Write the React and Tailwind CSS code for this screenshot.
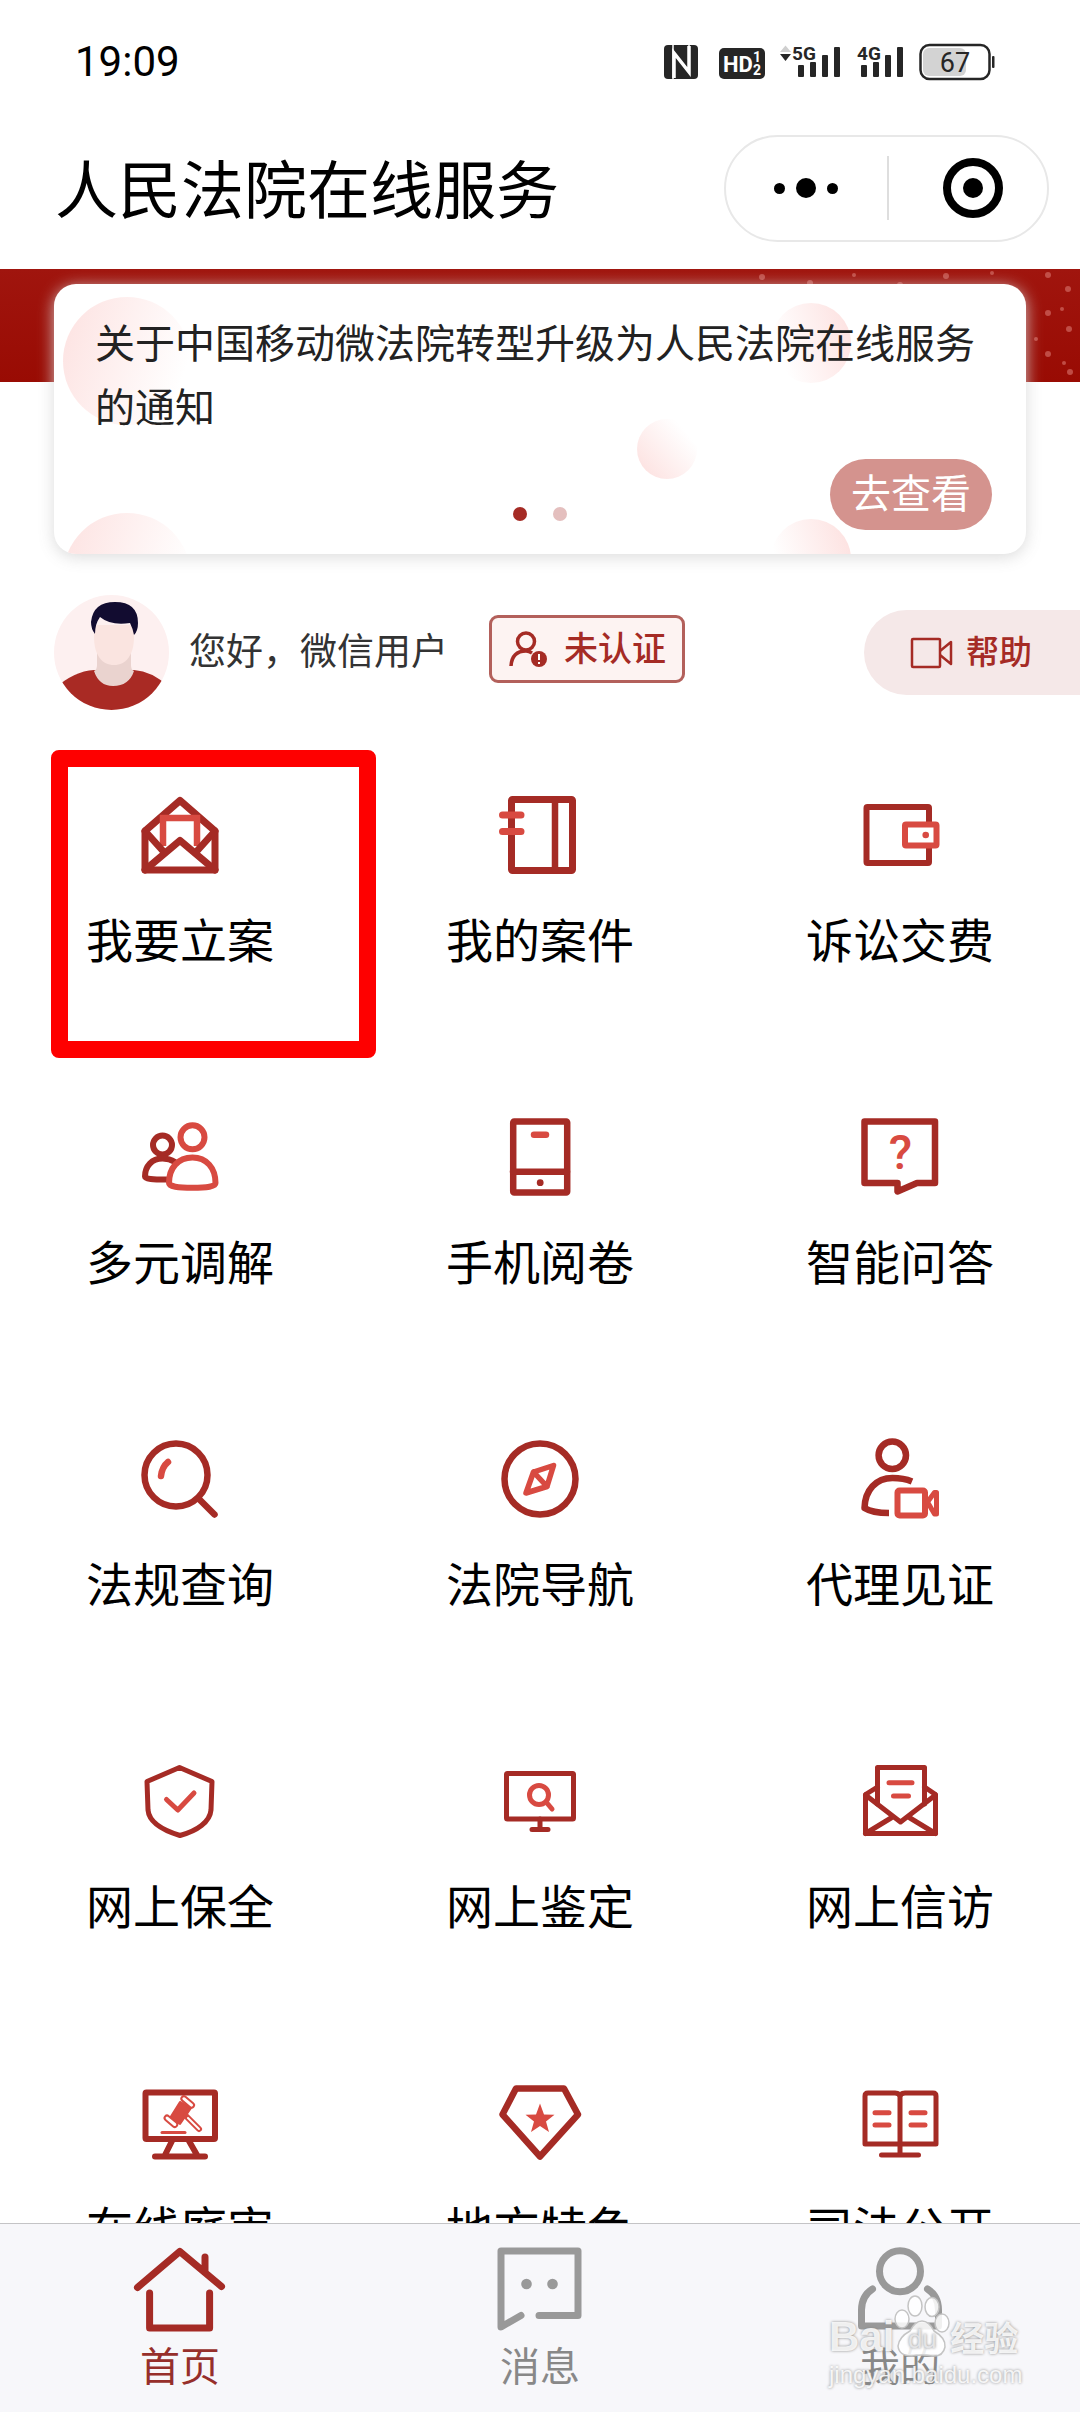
import React, { useState } from 'react';

const DARK = '#a52b25';
const LIGHT = '#d84a41';

// Shared wrapper for the line icons of the service grid
const GridIcon = ({ width = 7, children }) => (
    <svg
        viewBox="0 0 90 90"
        className="w-[90px] h-[90px]"
        fill="none"
        stroke={DARK}
        strokeWidth={width}
        strokeLinecap="round"
        strokeLinejoin="round"
        aria-hidden="true"
    >
        {children}
    </svg>
);

const FilingIcon = () => (
    <GridIcon>
        <path d="M45 10.5 L10 41 V80 H80 V41 Z" />
        <path d="M28 56 V28 H62 V56" stroke={LIGHT} strokeWidth="6.5" strokeLinejoin="miter" strokeLinecap="butt" />
        <path d="M10 41 L28 61 M80 41 L62 61 M10 80 L45 50.5 L80 80" />
    </GridIcon>
);

const CaseIcon = () => (
    <GridIcon>
        <rect x="16.5" y="9.5" width="61" height="71" rx="1" />
        <path d="M60 10 V80" strokeWidth="6.5" />
        <path d="M7.5 25 H26 M7.5 41.5 H26" stroke={LIGHT} />
    </GridIcon>
);

const WalletIcon = () => (
    <GridIcon width={6}>
        <rect x="11.5" y="17" width="62.5" height="56" rx="1" />
        <rect x="50" y="34.5" width="31.5" height="21" rx="1" stroke={LIGHT} fill="#fff" />
        <circle cx="70.7" cy="45" r="3.3" fill={LIGHT} stroke="none" />
    </GridIcon>
);

const MediationIcon = () => (
    <GridIcon width={6}>
        <circle cx="27.5" cy="33" r="9.5" />
        <path d="M40 50 C36 47.5 32 46.5 27.5 46.5 C17 46.5 10 54 10 64.5 C10 67 18 67.5 31 67.5" />
        <circle cx="57.5" cy="25.3" r="12" stroke={LIGHT} />
        <path
            d="M34 71 C34 56 43 45.5 57.5 45.5 C71.5 45.5 80.5 56 80.5 71 C80.5 74.5 72 75.8 57.5 75.8 C43 75.8 34 74.5 34 71 Z"
            stroke={LIGHT}
            fill="#fff"
        />
    </GridIcon>
);

const PhoneIcon = () => (
    <GridIcon width={6.5}>
        <rect x="18.2" y="9.5" width="54" height="71" rx="1" />
        <path d="M18 59.7 H72" />
        <path d="M39 22.7 H51" stroke={LIGHT} />
        <circle cx="45.2" cy="70.7" r="3.4" fill={DARK} stroke="none" />
    </GridIcon>
);

const QuestionIcon = () => (
    <GridIcon width={6.5}>
        <path d="M9.5 9.5 H80 V71 H62 L42.5 79.5 V71 H9.5 Z" />
        <text x="45.5" y="57" textAnchor="middle" fontSize="48" fontFamily="Roboto" fontWeight="500" fill={LIGHT} stroke="none">?</text>
    </GridIcon>
);

const SearchIcon = () => (
    <GridIcon width={6.5}>
        <circle cx="41" cy="41" r="31.5" />
        <path d="M64 65 L79.5 80.5" />
        <path d="M33 28 Q27 33 26 42" stroke={LIGHT} />
    </GridIcon>
);

const CompassIcon = () => (
    <GridIcon width={6.5}>
        <circle cx="45" cy="45" r="35.5" />
        <path d="M58.5 31.5 L38.5 38 L31 59 L52 52.5 Z M38.5 38 L52 52.5" stroke={LIGHT} strokeWidth="5.5" />
    </GridIcon>
);

const WitnessIcon = () => (
    <GridIcon width={6.5}>
        <circle cx="37.3" cy="21.3" r="13.7" />
        <path d="M57 47.5 C51 45 45 44 37.5 44 C21 44 10 56 9.5 74 C15 77.5 23 79 34 79" strokeLinecap="butt" />
        <rect x="42.5" y="56.5" width="27.5" height="25" rx="2" stroke={LIGHT} strokeWidth="6" />
        <path d="M72.5 68 L79.5 58.5 H81.5 V80 H79.5 Z" stroke={LIGHT} strokeWidth="5" />
    </GridIcon>
);

const ShieldIcon = () => (
    <GridIcon width={5}>
        <path d="M44.5 11.5 L77 25.5 L76 54 C75 66 62 75 45 79.5 C27 74 14 66 13 54 L12 25.5 Z" />
        <path d="M31.5 43.5 L42.8 54 L59 37" stroke={LIGHT} />
    </GridIcon>
);

const AppraisalIcon = () => (
    <GridIcon width={5}>
        <rect x="11.5" y="17.5" width="67" height="45.5" rx="1" />
        <path d="M45 63 V73.5 M37 73.5 H53" />
        <circle cx="44" cy="39" r="9.5" stroke={LIGHT} />
        <path d="M52 47 L57 53" stroke={LIGHT} />
    </GridIcon>
);

const LetterIcon = () => (
    <GridIcon width={5}>
        <path d="M22.5 48 V11.5 H69.5 V48" />
        <path d="M22.5 31 L10.5 38.5 V77.5 H80.5 V38.5 L69.5 31" />
        <path d="M10.5 39 L45.5 66 L80.5 39 M10.5 77.5 L36 62 M80.5 77.5 L55 62" />
        <path d="M34 26.7 H57 M38.5 40 H53.5" stroke={LIGHT} />
    </GridIcon>
);

const TrialIcon = () => (
    <GridIcon width={6}>
        <rect x="10.5" y="14.5" width="69.5" height="46.5" rx="1" />
        <path d="M37 63 L30 77 M54 63 L62 77 M20 78.5 H70" />
        <g stroke={LIGHT} strokeWidth="2">
            <path d="M45 24 L35 40 L45 46 L56 30 Z" fill={LIGHT} />
            <rect x="45" y="21" width="15" height="5" rx="2.5" transform="rotate(40 52 24)" fill="#fff" />
            <rect x="28" y="41" width="15" height="5" rx="2.5" transform="rotate(40 36 44)" fill="#fff" />
            <path d="M51 38 L64 51" strokeWidth="6" />
            <path d="M53 40 L64 51" stroke="#fff" strokeWidth="2" />
            <path d="M27 54.5 H50" strokeWidth="3" />
        </g>
    </GridIcon>
);

const LocalIcon = () => (
    <GridIcon width={6.5}>
        <path d="M21 10.5 H69 L83 36.5 L45 78.5 L7.5 36.5 Z" />
        <path d="M45 25.5 L49 36.5 L59.5 36.8 L51 43.6 L54 54 L45 48 L36 54 L39 43.6 L30.5 36.8 L41 36.5 Z" fill={LIGHT} stroke="none" />
    </GridIcon>
);

const BookIcon = () => (
    <GridIcon width={5}>
        <path d="M45 19 Q45 15 40 15 H13 Q10 15 10 18 V66 H81 V18 Q81 15 78 15 H50 Q45 15 45 19 V77 M26.5 77 H63.5" />
        <path d="M20 34.7 H34 M20 47 H34 M56 34.7 H70 M56 47 H70" stroke={LIGHT} />
    </GridIcon>
);

const TabIcon = ({ children }) => (
    <svg
        viewBox="0 0 96 96"
        className="w-24 h-24"
        fill="none"
        stroke="currentColor"
        strokeWidth="7"
        strokeLinecap="round"
        strokeLinejoin="round"
        aria-hidden="true"
    >
        {children}
    </svg>
);

const HomeIcon = () => (
    <TabIcon>
        <path d="M5.5 46.5 L47.8 10.5 L89.5 45.5 M73 16 V30 M17.6 52 V87 H77.6 V52" />
    </TabIcon>
);

const MessageIcon = () => (
    <TabIcon>
        <path d="M47 74.5 H86 V10 H9 V86 L29 74.5" />
        <circle cx="34.5" cy="43" r="5.3" fill="currentColor" stroke="none" />
        <circle cx="60.5" cy="43" r="5.3" fill="currentColor" stroke="none" />
    </TabIcon>
);

const MeIcon = () => (
    <TabIcon>
        <circle cx="48" cy="30.3" r="20.5" />
        <path d="M20.5 48 Q9.5 55 9.5 69 V85 H86.5 V69 Q86.5 55 75.5 48" />
    </TabIcon>
);

const services = [
    { name: '我要立案', icon: FilingIcon, highlighted: true },
    { name: '我的案件', icon: CaseIcon },
    { name: '诉讼交费', icon: WalletIcon },
    { name: '多元调解', icon: MediationIcon },
    { name: '手机阅卷', icon: PhoneIcon },
    { name: '智能问答', icon: QuestionIcon },
    { name: '法规查询', icon: SearchIcon },
    { name: '法院导航', icon: CompassIcon },
    { name: '代理见证', icon: WitnessIcon },
    { name: '网上保全', icon: ShieldIcon },
    { name: '网上鉴定', icon: AppraisalIcon },
    { name: '网上信访', icon: LetterIcon },
    { name: '在线庭审', icon: TrialIcon },
    { name: '地方特色', icon: LocalIcon },
    { name: '司法公开', icon: BookIcon }
];

const tabs = [
    { id: 'home', name: '首页', icon: HomeIcon },
    { id: 'message', name: '消息', icon: MessageIcon },
    { id: 'me', name: '我的', icon: MeIcon }
];

const SignalBars = () => (
    <g fill="#262626">
        <rect x="0" y="21" width="6" height="12" rx="1" />
        <rect x="12" y="18" width="6" height="15" rx="1" />
        <rect x="24" y="11" width="6" height="22" rx="1" />
        <rect x="36" y="3" width="6" height="30" rx="1" />
    </g>
);

const StatusBar = () => (
    <div className="flex items-center justify-between h-[124px] pl-[75px] pr-[85px]">
        <time className="text-[42px] leading-none">19:09</time>
        <div className="flex items-center">
            <svg viewBox="0 0 34 36" className="w-[34px] h-9" aria-hidden="true">
                <rect x="0" y="1" width="34" height="34" rx="4" fill="#262626" />
                <path d="M10 34 V9 L25 28 V2" fill="none" stroke="#fff" strokeWidth="3.5" />
                <path d="M9 1 V35 M25 1 V20" stroke="#fff" strokeWidth="1.5" />
            </svg>
            <svg viewBox="0 0 46 36" className="w-[46px] h-9 ml-[21px]" aria-hidden="true">
                <rect x="0" y="4" width="46" height="31" rx="5" fill="#262626" />
                <g fill="#fff" fontFamily="Roboto" fontWeight="700">
                    <text x="4" y="28" fontSize="22">HD</text>
                    <text x="34" y="18" fontSize="14">1</text>
                    <text x="34" y="31" fontSize="14">2</text>
                </g>
            </svg>
            <svg viewBox="0 0 60 36" className="w-[60px] h-9 ml-[15px] overflow-visible" aria-hidden="true">
                <path d="M0 8 L5.5 1.5 L11 8 Z" fill="#cfcfcf" />
                <path d="M0 10 H11 L5.5 17 Z" fill="#262626" />
                <text x="12" y="16" fontSize="19" fontFamily="Roboto" fontWeight="700" fill="#262626">5G</text>
                <g transform="translate(18 0)"><SignalBars /></g>
            </svg>
            <svg viewBox="0 0 46 36" className="w-[46px] h-9 ml-[17px] overflow-visible" aria-hidden="true">
                <text x="0" y="16" fontSize="19" fontFamily="Roboto" fontWeight="700" fill="#262626">4G</text>
                <g transform="translate(4 0)"><SignalBars /></g>
            </svg>
            <svg viewBox="0 0 76 38" className="w-[76px] h-[38px] ml-4" aria-hidden="true">
                <rect x="4" y="5" width="43" height="28" rx="6" fill="#d3d3d3" />
                <rect x="1.5" y="2" width="69" height="34" rx="9" fill="none" stroke="#262626" strokeWidth="2.5" />
                <rect x="73" y="13" width="2.5" height="12" rx="1" fill="#262626" />
                <text x="36" y="29" textAnchor="middle" fontSize="27" fontFamily="Roboto" fill="#262626">67</text>
            </svg>
        </div>
    </div>
);

const TitleBar = () => (
    <div className="flex items-center justify-between h-32 pl-[55px] pr-[31px]">
        <h1 className="pt-1.5 text-[63px] leading-none">人民法院在线服务</h1>
        <div className="grid grid-cols-2 w-[325px] h-[107px] rounded-full border-2 border-[#e8e8e8]">
            <button type="button" aria-label="更多" className="flex justify-center items-center gap-[11px]">
                <span className="w-[11px] h-[11px] rounded-full bg-black" />
                <span className="w-5 h-5 rounded-full bg-black" />
                <span className="w-[11px] h-[11px] rounded-full bg-black" />
            </button>
            <button type="button" aria-label="关闭" className="flex items-center gap-[54px]">
                <span className="w-0.5 h-16 bg-[#dedede]" />
                <span className="flex justify-center items-center w-[60px] h-[60px] rounded-full border-8 border-black">
                    <span className="w-5 h-5 rounded-full bg-black" />
                </span>
            </button>
        </div>
    </div>
);

// Scattered dots along the red band: [x, y, radius]
const bandDots = [
    [12, 8, 3], [60, 14, 3], [104, 6, 2], [150, 16, 3], [196, 7, 3], [242, 4, 2], [298, 6, 3],
    [318, 20, 3], [298, 44, 3], [312, 40, 2], [319, 60, 3], [286, 70, 2], [298, 85, 3], [314, 94, 2], [320, 103, 3]
];

const Banner = () => (
    <section className="relative px-[54px] pt-[15px] bg-[linear-gradient(#a0150e,#990b03)] bg-[length:100%_113px] bg-no-repeat">
        <svg viewBox="0 0 330 113" className="absolute top-0 right-0 w-[330px] h-[113px]" aria-hidden="true">
            {bandDots.map(([x, y, r]) => (
                <circle key={`${x}-${y}`} cx={x} cy={y} r={r} fill="#d9776f" fillOpacity="0.6" />
            ))}
        </svg>
        <div className="relative h-[270px] px-[41px] pt-[29px] rounded-[22px] bg-white overflow-hidden shadow-[0_3px_16px_rgba(215,215,215,0.9)]">
            <svg viewBox="0 0 972 270" preserveAspectRatio="xMidYMid slice" className="absolute inset-0 w-full h-full" aria-hidden="true">
                <defs>
                    <linearGradient id="fadeRight" x1="0" y1="0.3" x2="0.95" y2="0.6">
                        <stop offset="0" stopColor="#fde4e3" />
                        <stop offset="1" stopColor="#fff" />
                    </linearGradient>
                    <linearGradient id="fadeLeft" x1="1" y1="0.3" x2="0.1" y2="0.6">
                        <stop offset="0" stopColor="#fde2e1" />
                        <stop offset="1" stopColor="#fff" />
                    </linearGradient>
                    <linearGradient id="fadeUp" x1="0.1" y1="0.8" x2="0.8" y2="0.2">
                        <stop offset="0" stopColor="#fde4e3" />
                        <stop offset="1" stopColor="#fff" />
                    </linearGradient>
                </defs>
                <circle cx="73" cy="77" r="64" fill="url(#fadeRight)" />
                <circle cx="73" cy="293" r="64" fill="url(#fadeRight)" />
                <circle cx="757" cy="59" r="40" fill="url(#fadeLeft)" />
                <circle cx="757" cy="275" r="40" fill="url(#fadeLeft)" />
                <circle cx="613" cy="165" r="30" fill="url(#fadeUp)" />
            </svg>
            <p className="relative text-[40px] leading-[64px] text-[#222]">
                关于中国移动微法院转型升级为人民法院在线服务的通知
            </p>
            <div className="absolute inset-x-0 bottom-[33px] flex justify-center gap-[26px]">
                <span className="w-3.5 h-3.5 rounded-full bg-[#a52b25]" />
                <span className="w-3.5 h-3.5 rounded-full bg-[#e4bfbe]" />
            </div>
            <button type="button" className="absolute right-[34px] bottom-6 w-[162px] h-[71px] rounded-full bg-[#d4938e] text-[40px] leading-none text-white">
                去查看
            </button>
        </div>
    </section>
);

const Avatar = () => (
    <svg viewBox="0 0 115 115" className="w-[115px] h-[115px]" role="img" aria-label="用户头像">
        <defs>
            <clipPath id="avatarClip">
                <circle cx="57.5" cy="57.5" r="57.5" />
            </clipPath>
        </defs>
        <g clipPath="url(#avatarClip)">
            <rect width="115" height="115" fill="#fdf0f0" />
            <path d="M0 94 Q20 76 40 75 H80 Q98 76 115 92 V115 H0 Z" fill="#a92a24" />
            <path d="M43 58 H77 V70 Q77 75 80 76 Q75 91 59 91 Q45 91 40 76 Q43 75 43 70 Z" fill="#ead3cf" />
            <path d="M40 30 H80 V42 C80 60 72 70 60 70 C48 70 40 60 40 42 Z" fill="#fae4e0" />
            <path d="M41 39 Q37 34 37 27 Q39 7 61 7 Q84 7 84 28 Q84 36 80 40 Q79 34 76 28 Q57 31 46 22 Q41 29 41 39 Z" fill="#120c30" />
        </g>
    </svg>
);

const UserRow = () => (
    <section className="flex items-center mt-[41px] pl-[54px]">
        <Avatar />
        <span className="ml-5 text-[37px] leading-none text-[#333]">您好，微信用户</span>
        <button
            type="button"
            className="flex items-center w-[196px] h-[68px] ml-[41px] mb-2 pl-[17px] gap-[17px] rounded-[9px] border-[3px] border-[#b3605b] bg-[#fdf3f2] text-[34px] leading-none font-medium text-[#a52b25]"
        >
            <svg viewBox="0 0 38 38" className="w-[38px] h-[38px]" fill="none" stroke={DARK} strokeWidth="3.5" aria-hidden="true">
                <circle cx="17" cy="11.5" r="8.5" />
                <path d="M2 36 Q3 21 17 21 Q20 21 23 23" />
                <circle cx="30" cy="29" r="8" fill={DARK} stroke="none" />
                <path d="M30 24 V30 M30 32 V34" stroke="#fff" strokeWidth="2" />
            </svg>
            未认证
        </button>
        <button
            type="button"
            className="flex items-center h-[85px] ml-auto pl-[46px] pr-12 gap-3 rounded-l-full bg-[#f5e8e8] text-[33px] leading-none font-medium text-[#a52b25]"
        >
            <svg viewBox="0 0 44 32" className="w-11 h-8" fill="none" stroke={DARK} strokeWidth="2.5" strokeLinejoin="round" aria-hidden="true">
                <rect x="2" y="2" width="28" height="28" rx="1" />
                <path d="M30 14 L41 5 V27 L30 18" />
            </svg>
            帮助
        </button>
    </section>
);

const ServiceGrid = () => (
    <section className="grid grid-cols-3 mt-10">
        {services.map(({ name, icon: Icon, highlighted }) => (
            <a key={name} href="#" className="relative flex flex-col items-center h-[322px] pt-10">
                <Icon />
                <span className="mt-8 text-[47px] leading-[60px]">{name}</span>
                {highlighted && (
                    <span className="absolute top-0 left-[51px] -right-4 bottom-3.5 rounded-lg border-[17px] border-[#fe0000]" />
                )}
            </a>
        ))}
    </section>
);

const TabBar = () => {
    const [active, setActive] = useState('home');

    return (
        <nav className="relative z-10 grid grid-cols-3 pt-[17px] pb-[19px] border-t border-[#c4c4c6] bg-[#f7f7fa]">
            {tabs.map(({ id, name, icon: Icon }) => (
                <button
                    key={id}
                    type="button"
                    onClick={() => setActive(id)}
                    className={`flex flex-col items-center gap-1.5 ${active === id ? 'text-[#a52b25]' : 'text-[#999]'}`}
                >
                    <Icon />
                    <span className={`text-[40px] leading-[50px] ${active === id ? 'text-[#962f2b]' : 'text-[#888]'}`}>{name}</span>
                </button>
            ))}
        </nav>
    );
};

const Watermark = () => (
    <div className="absolute right-[59px] bottom-[21px] z-20 w-[192px] text-white/85 font-['Liberation_Sans','Noto_Sans_CJK_SC',sans-serif] [text-shadow:0_0_3px_#888] pointer-events-none">
        <div className="flex items-end h-[64px] font-bold">
            <span className="text-[42px] leading-[42px]">Bai</span>
            <span className="relative flex justify-center items-end w-[56px] h-[64px]">
                <svg viewBox="0 0 56 64" className="absolute inset-0 w-full h-full" fill="#fff" fillOpacity="0.85" stroke="#c4c4c4" strokeWidth="1.5" aria-hidden="true">
                    <ellipse cx="8" cy="25" rx="7" ry="9" />
                    <ellipse cx="21" cy="12" rx="7" ry="10" />
                    <ellipse cx="38" cy="13" rx="7" ry="9.5" />
                    <ellipse cx="48" cy="29" rx="7" ry="9" />
                    <path d="M28 27 Q35 27 40 37 Q52 44 51 53 Q49 63 38 62 Q28 60 18 62 Q5 62 4 52 Q5 43 16 37 Q21 27 28 27 Z" />
                </svg>
                <span className="relative text-[26px] leading-[38px] font-normal text-[#e4e4e6]">du</span>
            </span>
            <span className="text-[34px] leading-[38px]">经验</span>
        </div>
        <div className="text-[24px] leading-[33px]">jingyan.baidu.com</div>
    </div>
);

const App = () => (
    <div className="relative flex flex-col h-screen overflow-hidden bg-white text-black font-['Roboto','Noto_Sans_CJK_SC',sans-serif]">
        <header className="pb-[17px]">
            <StatusBar />
            <TitleBar />
        </header>

        <main className="flex-1 min-h-0 overflow-hidden">
            <Banner />
            <UserRow />
            <ServiceGrid />
        </main>

        <TabBar />
        <Watermark />
    </div>
);

export default App;
